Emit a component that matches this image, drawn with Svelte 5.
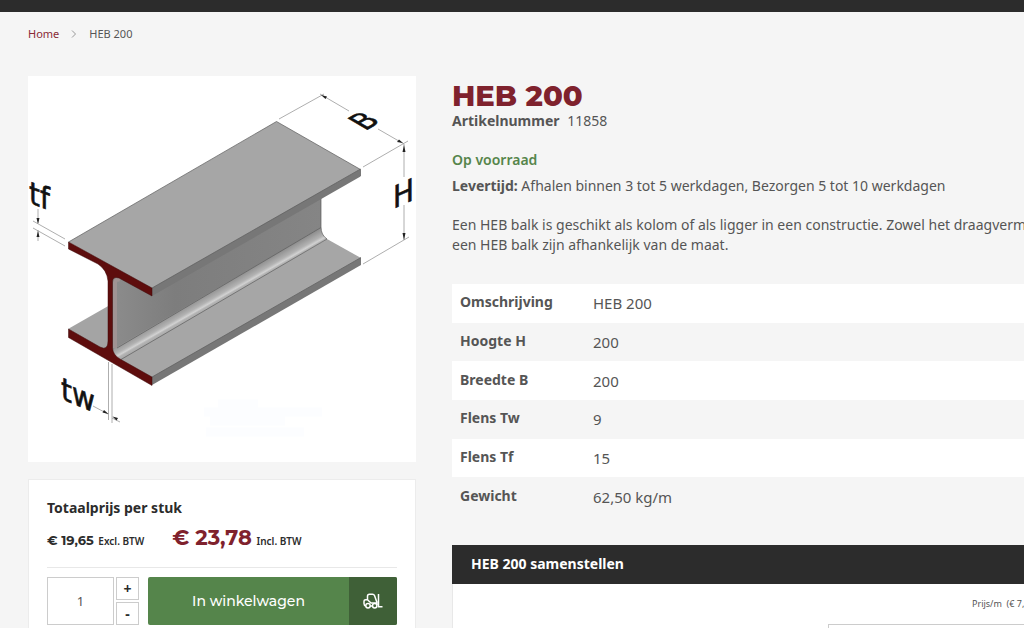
<script lang="ts">
  const specs = [
    { label: 'Omschrijving', value: 'HEB 200' },
    { label: 'Hoogte H', value: '200' },
    { label: 'Breedte B', value: '200' },
    { label: 'Flens Tw', value: '9' },
    { label: 'Flens Tf', value: '15' },
    { label: 'Gewicht', value: '62,50 kg/m' },
  ]

  let quantity = $state(1)
</script>

<div class="topbar"></div>

<nav
  class="breadcrumbs"
  aria-label="Breadcrumb"
>
  <a href="#home">Home</a>
  <svg
    class="chevron"
    viewBox="0 0 6 10"
    aria-hidden="true"
  >
    <path d="M1 1.5 4.5 5 1 8.5" />
  </svg>
  <span>HEB 200</span>
</nav>

<main class="product">
  <div class="media">
    <svg
      class="drawing"
      viewBox="0 0 388 386"
      role="img"
      aria-label="HEB balk"
    >
      <defs>
        <linearGradient
          id="fillet"
          gradientUnits="userSpaceOnUse"
          x1="190"
          y1="211"
          x2="198"
          y2="225"
        >
          <stop offset="0" stop-color="#8e8e8e" />
          <stop offset="0.45" stop-color="#b2b2b2" />
          <stop offset="0.62" stop-color="#d2d2d2" />
          <stop offset="0.72" stop-color="#b4b4b4" />
          <stop offset="1" stop-color="#a2a2a2" />
        </linearGradient>
        <linearGradient
          id="web"
          gradientUnits="userSpaceOnUse"
          x1="84"
          y1="0"
          x2="293"
          y2="0"
        >
          <stop offset="0" stop-color="#8c8c8c" />
          <stop offset="0.3" stop-color="#7d7d7d" />
          <stop offset="1" stop-color="#858585" />
        </linearGradient>
      </defs>

      <g class="smudge">
        <path d="M190 328h40M176 336h118M182 345h75M178 356h98" />
      </g>

      <!-- bottom flange -->
      <path fill="#a4a4a4" d="M40 253 82 229V272L76 274Z" />
      <path fill="#a6a6a6" d="M90 283 299 163 333 182 124 302Z" />
      <path fill="#777" d="M124 301 333 181.500V189L124 309Z" />
      <path class="edge" d="M124 301 333 181.500" />

      <!-- web and fillet -->
      <path fill="url(#fillet)" d="M84 271 293 151Q293 159 299 163L93 284 84 279Z" />
      <path fill="url(#web)" d="M83 198 124 212 293 115V151.500L89 271 83 274Z" />
      <path class="rim" d="M87 272V208Q87 202 92 204" />
      <path class="edge" d="M89 272 293 151.500M93 283.500 299 163" />
      <path class="edge" d="M293 118V151Q293 159 299 163" />

      <!-- top flange -->
      <path fill="#a6a6a6" d="M40.500 166 248.500 45.500 332.500 93.500 124 213Z" />
      <path fill="#777" d="M124 212 332.500 93V100.500L124 220Z" />
      <path class="edge" d="M124 212 332.500 93M40.500 166 248.500 45.500 332.500 93.500V100" />

      <!-- cut face -->
      <path
        fill="#5e0d0d"
        stroke="#3d0808"
        stroke-width="0.5"
        d="M40.500 166 124 212V220L91 202Q84.500 200 84.500 206V272Q85 279 92 283L124 301V309.500L40.500 261.500V253L72 271Q80 275 80 265V205Q79 194 70 188L40.500 173Z"
      />

      <!-- dimension lines -->
      <g class="dimension">
        <path d="M251 43 296 18M292 18 321 35M350 53 376 68M335 91 380 65M376 68V101M376 129V164M335 188 381 161" />
        <path d="M5 145 37 163M5 152 37 170M10 133V147M10 154V165" />
        <path d="M80.500 286V344M84 288V347M65 330 80 338M84 342 92 346" />
      </g>
      <g class="arrow">
        <path d="M293 19 299 20.500 297.500 23ZM375 67 369 66 371 63.500ZM376 69 374.500 76H377.500ZM376 164 374.500 157H377.500Z" />
        <path d="M10 148 8.500 142H11.500ZM10 155 8.500 161H11.500ZM80.500 338 74.500 336.500 76 334ZM84.500 340.500 90 342 88.500 344.500Z" />
      </g>

      <g class="letters">
        <text transform="translate(1 127) skewY(20)">tf</text>
        <text transform="matrix(0.87 -0.5 0.87 0.5 337 55)">B</text>
        <text transform="translate(365 133) skewY(-24)">H</text>
        <text transform="translate(33 323) skewY(22)">tw</text>
      </g>
    </svg>

    <form
      class="buybox"
      onsubmit={(event) => event.preventDefault()}
    >
      <h2>Totaalprijs per stuk</h2>

      <div class="prices">
        <span class="excl"><strong>€ 19,65</strong> <small>Excl. BTW</small></span>
        <span class="incl"><strong>€ 23,78</strong> <small>Incl. BTW</small></span>
      </div>

      <div class="actions">
        <input
          class="quantity"
          type="text"
          inputmode="numeric"
          aria-label="Aantal"
          bind:value={quantity}
        />
        <div class="steppers">
          <button
            type="button"
            aria-label="Meer"
            onclick={() => (quantity = Number(quantity) + 1)}>+</button
          >
          <button
            type="button"
            aria-label="Minder"
            onclick={() => (quantity = Math.max(1, Number(quantity) - 1))}>-</button
          >
        </div>
        <button
          class="add"
          type="submit"
        >
          <span class="add_label">In winkelwagen</span>
          <span class="add_icon">
            <svg
              viewBox="0 0 20 16"
              aria-hidden="true"
            >
              <path d="M2.800 13Q1 12.500 1 10.500V8.500Q1 6.800 2.800 6.800H4.500V3.200Q4.500 1.200 6.500 1.200H9.500Q11 1.200 11.500 2.500L13.800 9V12M4.500 6.800 8 10H13.500M15.500 1V13.800H19.500M7 13H9.500" />
              <circle cx="5" cy="12.800" r="2.200" />
              <circle cx="11.700" cy="12.800" r="2.200" />
            </svg>
          </span>
        </button>
      </div>
    </form>
  </div>

  <div class="info">
    <h1>HEB 200</h1>
    <p class="sku"><strong>Artikelnummer</strong> <span>11858</span></p>
    <p class="stock">Op voorraad</p>
    <p class="delivery">
      <strong>Levertijd:</strong> Afhalen binnen 3 tot 5 werkdagen, Bezorgen 5 tot 10 werkdagen
    </p>
    <p class="description">
      Een HEB balk is geschikt als kolom of als ligger in een constructie. Zowel het draagvermogen als<br />
      een HEB balk zijn afhankelijk van de maat.
    </p>

    <table class="specs">
      <tbody>
        {#each specs as spec}
          <tr>
            <th scope="row">{spec.label}</th>
            <td>{spec.value}</td>
          </tr>
        {/each}
      </tbody>
    </table>

    <section class="configurator">
      <h2>HEB 200 samenstellen</h2>
      <div class="options">
        <label for="length">Prijs/m &nbsp;(€ 7,94)</label>
        <input
          id="length"
          type="text"
        />
      </div>
    </section>
  </div>
</main>

<style>
  :global(body) {
    overflow: hidden;
    background: #f5f5f5;
    color: #555;
    font-family: 'Noto Sans', 'Open Sans', sans-serif;
    font-size: 14px;
    line-height: 20px;
  }

  h1,
  h2,
  p {
    margin: 0;
  }

  input,
  button {
    box-sizing: border-box;
    margin: 0;
    padding: 0;
    font-family: inherit;
  }

  .topbar {
    height: 12px;
    background: #2c2c2c;
  }

  .breadcrumbs {
    display: flex;
    align-items: center;
    gap: 12px;
    padding: 12px 28px;
    font-size: 11px;
  }

  .breadcrumbs a {
    color: #8a2a35;
    text-decoration: none;
  }

  .chevron {
    width: 6px;
    height: 10px;
    fill: none;
    stroke: #999;
  }

  .product {
    display: grid;
    grid-template-columns: 388px minmax(720px, 1fr);
    gap: 36px;
    padding: 20px 28px 0;
  }

  .drawing {
    display: block;
    width: 100%;
    background: #fff;
  }

  .edge {
    fill: none;
    stroke: #5c5c5c;
    stroke-width: 0.7;
  }

  .rim {
    fill: none;
    stroke: #a09494;
    stroke-width: 4;
  }

  .dimension {
    fill: none;
    stroke: #999;
    stroke-width: 0.8;
  }

  .arrow {
    fill: #222;
  }

  .letters {
    fill: #111;
    stroke: #111;
    stroke-width: 0.6;
    font-family: 'DejaVu Sans Condensed', 'DejaVu Sans', sans-serif;
    font-size: 31px;
  }

  .smudge {
    fill: none;
    stroke: #fcfdff;
    stroke-width: 9;
  }

  .buybox {
    margin-top: 17px;
    padding: 18px 18px 19px;
    border: 1px solid #ececec;
    background: #fff;
    color: #2c2c2c;
  }

  .buybox h2 {
    font-size: 14px;
    line-height: 20px;
  }

  .prices {
    display: flex;
    align-items: baseline;
    gap: 28px;
    padding: 7px 0 13px;
    border-bottom: 1px solid #e8e8e8;
    line-height: 26px;
  }

  .prices strong {
    font-family: Montserrat, Inter, sans-serif;
    font-weight: 700;
  }

  .excl strong {
    font-size: 13px;
  }

  .incl strong {
    color: #7f222d;
    font-size: 21px;
  }

  .prices small {
    margin-left: 1px;
    font-size: 10px;
    font-weight: 600;
  }

  .actions {
    display: flex;
    padding-top: 9px;
    height: 48px;
  }

  .quantity {
    width: 67px;
    border: 1px solid #ccc;
    background: #fff;
    color: #555;
    font-size: 13px;
    text-align: center;
  }

  .steppers {
    display: grid;
    gap: 2px;
    margin: 0 9px 0 2px;
    width: 23px;
  }

  .steppers button {
    border: 1px solid #ccc;
    background: #fff;
    color: #2c2c2c;
    font-size: 14px;
    font-weight: 700;
    line-height: 20px;
  }

  .add {
    display: flex;
    flex: 1;
    overflow: hidden;
    border: 0;
    border-radius: 2px;
    background: #55854b;
    color: #fff;
    font-family: Montserrat, Inter, sans-serif;
    font-size: 14px;
    font-weight: 500;
  }

  .add_label,
  .add_icon {
    display: flex;
    align-items: center;
    justify-content: center;
    height: 100%;
  }

  .add_label {
    flex: 1;
  }

  .add_icon {
    width: 48px;
    background: #3f6037;
  }

  .add_icon svg {
    width: 20px;
    height: 16px;
    fill: none;
    stroke: #fff;
    stroke-width: 1.5;
  }

  h1 {
    padding-top: 5px;
    color: #7f222d;
    font-family: Montserrat, Inter, sans-serif;
    font-size: 29px;
    font-weight: 800;
    line-height: 30px;
  }

  .sku span {
    margin-left: 4px;
  }

  .stock {
    margin-top: 19px;
    color: #55854b;
    font-weight: 600;
  }

  .delivery {
    margin-top: 6px;
  }

  .description {
    margin-top: 19px;
    white-space: nowrap;
  }

  .specs {
    margin-top: 29px;
    width: 100%;
    height: 232px;
    border-collapse: collapse;
  }

  .specs th,
  .specs td {
    box-sizing: border-box;
    padding: 0;
    text-align: left;
  }

  .specs th {
    padding: 0 0 2px 8px;
    width: 141px;
  }

  .specs td {
    font-size: 15px;
  }

  .specs tr:nth-child(odd) {
    background: #fff;
  }

  .configurator {
    margin-top: 29px;
    background: #fff;
  }

  .configurator h2 {
    padding: 9px 19px 10px;
    background: #2c2c2c;
    color: #fff;
    font-size: 14px;
    line-height: 20px;
  }

  .options {
    display: grid;
    grid-template-columns: 375px 1fr;
    row-gap: 10px;
    padding-top: 10px;
    border-left: 1px solid #e8e8e8;
  }

  .options label {
    grid-column: 2;
    padding-left: 144px;
    font-size: 9px;
  }

  .options input {
    grid-column: 2;
    height: 36px;
    border: 1px solid #ccc;
    background: #fff;
  }
</style>
